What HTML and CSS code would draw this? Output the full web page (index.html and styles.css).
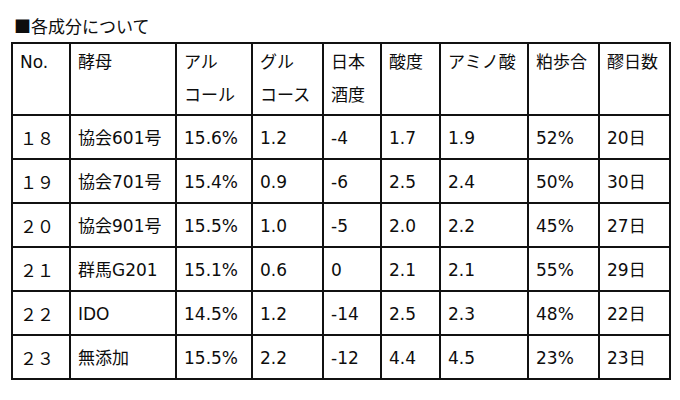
FILE: index.html
```html
<!DOCTYPE html>
<html lang="ja">
<head>
<meta charset="utf-8">
<link rel="stylesheet" href="styles.css">
</head>
<body>
<div class="page">
  <div class="title">■各成分について</div>
  <table class="grid">
    <colgroup>
      <col class="c1"><col class="c2"><col class="c3"><col class="c4"><col class="c5"><col class="c6"><col class="c7"><col class="c8"><col class="c9">
    </colgroup>
    <thead>
      <tr>
        <th>No.</th><th>酵母</th><th>アル<br>コール</th><th>グル<br>コース</th><th>日本<br>酒度</th><th>酸度</th><th>アミノ酸</th><th>粕歩合</th><th>醪日数</th>
      </tr>
    </thead>
    <tbody>
      <tr><td class="no">１８</td><td>協会601号</td><td>15.6%</td><td>1.2</td><td>-4</td><td>1.7</td><td>1.9</td><td>52%</td><td>20日</td></tr>
      <tr><td class="no">１９</td><td>協会701号</td><td>15.4%</td><td>0.9</td><td>-6</td><td>2.5</td><td>2.4</td><td>50%</td><td>30日</td></tr>
      <tr><td class="no">２０</td><td>協会901号</td><td>15.5%</td><td>1.0</td><td>-5</td><td>2.0</td><td>2.2</td><td>45%</td><td>27日</td></tr>
      <tr><td class="no">２１</td><td>群馬G201</td><td>15.1%</td><td>0.6</td><td>0</td><td>2.1</td><td>2.1</td><td>55%</td><td>29日</td></tr>
      <tr><td class="no">２２</td><td>IDO</td><td>14.5%</td><td>1.2</td><td>-14</td><td>2.5</td><td>2.3</td><td>48%</td><td>22日</td></tr>
      <tr><td class="no">２３</td><td>無添加</td><td>15.5%</td><td>2.2</td><td>-12</td><td>4.4</td><td>4.5</td><td>23%</td><td>23日</td></tr>
    </tbody>
  </table>
</div>
</body>
</html>
```
FILE: styles.css
```css
html, body {
  margin: 0;
  padding: 0;
  background: #ffffff;
}
.page {
  padding: 10px 0 0 11px;
  color: #0d0d0d;
  font-family: "DejaVu Sans", "Noto Sans CJK JP", sans-serif;
  font-size: 17px;
}
.title {
  font-family: "Noto Sans CJK JP", sans-serif;
  font-size: 17px;
  line-height: 32px;
  padding-left: 3px;
  height: 32px;
}
.grid {
  border-collapse: collapse;
  table-layout: fixed;
  width: 660px;
}
.c1 { width: 58px; }
.c2 { width: 106px; }
.c3 { width: 76px; }
.c4 { width: 71px; }
.c5 { width: 58px; }
.c6 { width: 59px; }
.c7 { width: 88px; }
.c8 { width: 71px; }
.c9 { width: 71px; }
.grid th, .grid td {
  border: 2px solid #111111;
  text-align: left;
  font-weight: normal;
  padding: 0 0 0 7px;
  white-space: nowrap;
  overflow: hidden;
}
.grid th {
  height: 68px;
  vertical-align: top;
  line-height: 33px;
  padding-top: 2px;
}
.grid td {
  height: 40px;
  vertical-align: middle;
  line-height: 24px;
  padding-top: 2px;
}
.grid td.no {
  font-family: "Noto Sans CJK JP", sans-serif;
}
```
